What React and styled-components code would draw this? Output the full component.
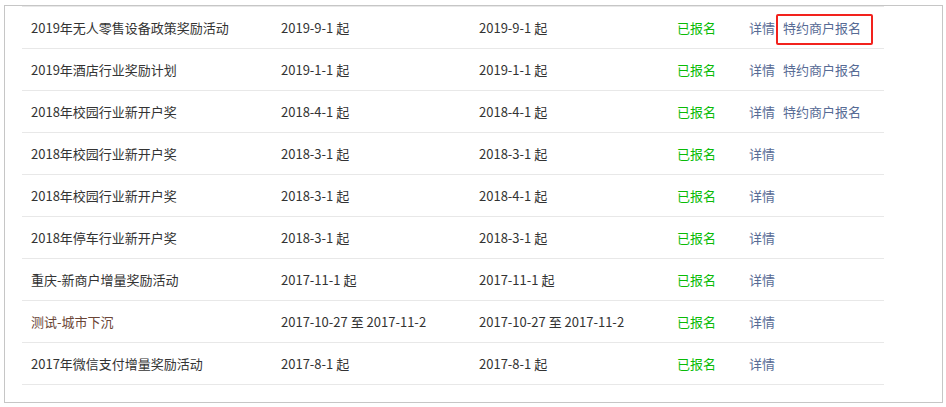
import React from 'react';
import styled, { createGlobalStyle } from 'styled-components';

const GlobalStyle = createGlobalStyle`
    body {
        margin: 0;
        background: #fff;
        font-family: "Microsoft YaHei", "Noto Sans CJK SC", "Noto Sans", sans-serif;
    }
`;

const Frame = styled.div`
    box-sizing: border-box;
    width: 939px;
    height: 398px;
    margin: 5px 0 0 4px;
    border: 1px solid #c6c6c6;
    padding: 0 0 0 17px;
`;

const Table = styled.table`
    width: 862px;
    table-layout: fixed;
    border-collapse: separate;
    border-spacing: 0;
    border-top: 1px solid #e8e8e8;
    font-size: 13px;
    color: #333;
`;

const Cell = styled.td`
    box-sizing: border-box;
    height: 42px;
    padding: 0 0 0 9px;
    border-bottom: 1px solid #e8e8e8;
    line-height: 20px;
    white-space: nowrap;
    vertical-align: middle;
    color: ${p => p.$color || 'inherit'};
`;

const Link = styled.a`
    color: #576b95;
    text-decoration: none;
    cursor: pointer;
    & + & {
        margin-left: 8px;
    }
`;

const Marked = styled(Link)`
    position: relative;
    display: inline-block;
    &::after {
        content: '';
        position: absolute;
        left: -7px;
        top: -4px;
        width: 93px;
        height: 27px;
        border: 2px solid #f2221d;
        border-radius: 2px;
    }
`;

const rows = [
    { name: '2019年无人零售设备政策奖励活动', start: '2019-9-1 起', end: '2019-9-1 起', extra: true, mark: true },
    { name: '2019年酒店行业奖励计划', start: '2019-1-1 起', end: '2019-1-1 起', extra: true },
    { name: '2018年校园行业新开户奖', start: '2018-4-1 起', end: '2018-4-1 起', extra: true },
    { name: '2018年校园行业新开户奖', start: '2018-3-1 起', end: '2018-3-1 起' },
    { name: '2018年校园行业新开户奖', start: '2018-3-1 起', end: '2018-4-1 起' },
    { name: '2018年停车行业新开户奖', start: '2018-3-1 起', end: '2018-3-1 起' },
    { name: '重庆-新商户增量奖励活动', start: '2017-11-1 起', end: '2017-11-1 起' },
    { name: '测试-城市下沉', start: '2017-10-27 至 2017-11-2', end: '2017-10-27 至 2017-11-2', test: true },
    { name: '2017年微信支付增量奖励活动', start: '2017-8-1 起', end: '2017-8-1 起' },
];

export default function App() {
    return (
        <>
            <GlobalStyle />
            <Frame>
                <Table>
                    <colgroup>
                        <col style={{ width: 250 }} />
                        <col style={{ width: 198 }} />
                        <col style={{ width: 198 }} />
                        <col style={{ width: 72 }} />
                        <col style={{ width: 144 }} />
                    </colgroup>
                    <tbody>
                        {rows.map((r, key) => (
                            <tr key={key}>
                                <Cell $color={r.test ? '#6a4536' : undefined}>{r.name}</Cell>
                                <Cell>{r.start}</Cell>
                                <Cell>{r.end}</Cell>
                                <Cell $color="#09bb07">已报名</Cell>
                                <Cell>
                                    <Link>详情</Link>
                                    {r.extra && (r.mark ? <Marked>特约商户报名</Marked> : <Link>特约商户报名</Link>)}
                                </Cell>
                            </tr>
                        ))}
                    </tbody>
                </Table>
            </Frame>
        </>
    );
}
